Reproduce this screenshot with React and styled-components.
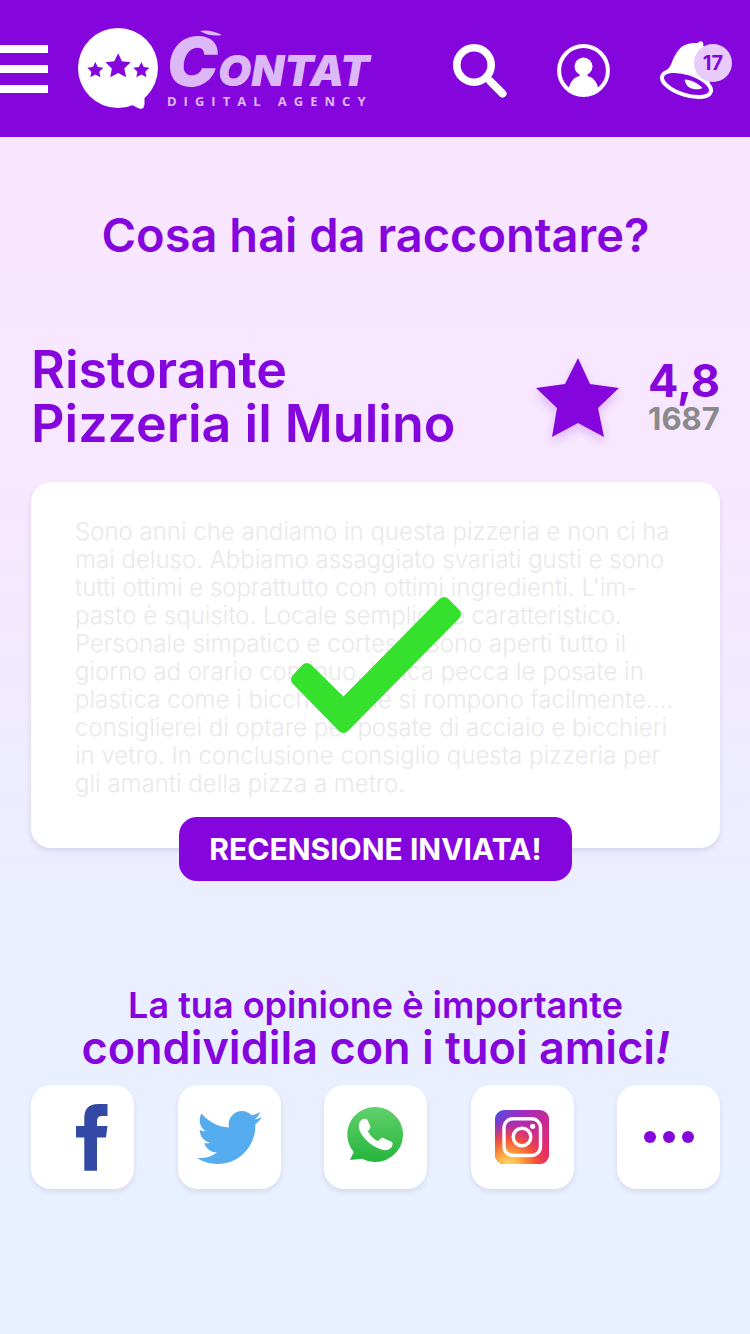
import React from "react"
import styled, { createGlobalStyle } from "styled-components"

// Icons
import { FaTwitter } from "react-icons/fa"

const purple = "#8506dc"

const GlobalStyle = createGlobalStyle`
    * {
        box-sizing: border-box;
    }

    body {
        margin: 0;
        min-height: 100vh;
        color: ${purple};
        font-family: Inter, "Liberation Sans", sans-serif;
        background: linear-gradient(#f9e6ff 0, #f7e7ff 36%, #ebeeff 66%, #e8f1ff 100%);
    }
`

const Header = styled.header`
    display: flex;
    align-items: center;
    height: 137px;
    padding-right: 18px;
    background: ${purple};
`

const IconButton = styled.button`
    display: flex;
    padding: 0;
    border: 0;
    color: white;
    background: none;
    font-family: inherit;
    cursor: pointer;
`

const MenuButton = styled(IconButton)`
    flex-direction: column;
    gap: 12px;
    width: 48px;
`

const MenuBar = styled.span`
    width: 100%;
    height: 8px;
    background: white;
`

const Brand = styled.a`
    display: flex;
    align-items: center;
    gap: 9px;
    margin-left: 30px;
    color: #dcb8f6;
    text-decoration: none;
`

const Wordmark = styled.span`
    position: relative;
    display: flex;
    flex-direction: column;
`

const BrandName = styled.span`
    display: block;
    height: 64px;
    font-size: 43px;
    font-style: italic;
    font-weight: 900;
    line-height: 64px;
    white-space: nowrap;

    &::first-letter {
        font-size: 68px;
    }
`

const BrandStroke = styled.svg`
    position: absolute;
    top: 1px;
    left: 33px;
`

const BrandTag = styled.span`
    font-family: "Open Sans", sans-serif;
    font-size: 13px;
    font-weight: 700;
    letter-spacing: 7px;
    line-height: 16px;
    white-space: nowrap;
`

const Actions = styled.nav`
    display: flex;
    align-items: center;
    gap: 50px;
    margin-left: auto;
    padding-top: 4px;
`

const BellButton = styled(IconButton)`
    position: relative;
    width: 72px;
`

const Badge = styled.span`
    position: absolute;
    top: 3px;
    right: 0;
    width: 38px;
    height: 38px;
    border-radius: 50%;
    color: ${purple};
    background: #e8cbfb;
    font-size: 20px;
    font-weight: 700;
    line-height: 38px;
    text-align: center;
`

const Main = styled.main`
    padding: 70px 30px 80px 31px;
`

const Title = styled.h1`
    margin: 0;
    font-size: 47px;
    font-weight: 600;
    line-height: 56px;
    text-align: center;
`

const Place = styled.section`
    display: flex;
    align-items: center;
    justify-content: space-between;
    margin-top: 80px;
`

const PlaceName = styled.h2`
    margin: 0;
    font-size: 52px;
    font-weight: 600;
    line-height: 54px;
`

const Rating = styled.div`
    display: flex;
    align-items: center;
    gap: 28px;
    padding-top: 2px;

    svg {
        filter: drop-shadow(0 5px 4px rgba(133, 6, 220, 0.2));
    }
`

const Score = styled.strong`
    display: block;
    font-size: 45px;
    font-weight: 700;
    line-height: 42px;
`

const Count = styled.span`
    display: block;
    color: #8a8a8a;
    font-size: 31px;
    font-weight: 700;
    line-height: 34px;
`

const Review = styled.section`
    position: relative;
    display: flex;
    flex-direction: column;
    align-items: center;
    margin-top: 31px;
    padding: 36px 44px 0;
    border-radius: 20px;
    background: white;
    box-shadow: 0 3px 5px rgba(60, 40, 110, 0.12);
`

const ReviewText = styled.p`
    align-self: stretch;
    margin: 0;
    color: #e9e9eb;
    font-size: 24px;
    font-weight: 300;
    line-height: 28px;
    white-space: pre;
`

const CheckMark = styled.svg`
    position: absolute;
    top: 115px;
    left: 50%;
    margin-left: -85px;
`

const SentButton = styled.button`
    height: 64px;
    margin: 19px 0 -33px;
    padding: 0 30px;
    border: 0;
    border-radius: 18px;
    color: white;
    background: ${purple};
    font: inherit;
    font-size: 30px;
    font-weight: 700;
    white-space: nowrap;
`

const Share = styled.section`
    margin-top: 137px;
    text-align: center;
`

const ShareLead = styled.p`
    margin: 0;
    font-size: 36px;
    font-weight: 600;
    line-height: 40px;
`

const ShareTitle = styled.h2`
    margin: 0;
    font-size: 45px;
    font-weight: 600;
    line-height: 46px;
`

const Tiles = styled.div`
    display: flex;
    justify-content: space-between;
    margin-top: 14px;
`

const Tile = styled.button`
    display: flex;
    align-items: center;
    justify-content: center;
    width: 103px;
    height: 104px;
    padding: 0;
    border: 0;
    border-radius: 20px;
    color: ${(props) => props.$color || purple};
    background: white;
    box-shadow: 0 3px 5px rgba(60, 40, 110, 0.1);
    cursor: pointer;
`

const STAR = "42,0 54,26 83,30 62,50 68,79 42,65 16,79 21,50 0,30 29,26"

const REVIEW = `Sono anni che andiamo in questa pizzeria e non ci ha
mai deluso. Abbiamo assaggiato svariati gusti e sono
tutti ottimi e soprattutto con ottimi ingredienti. L'im-
pasto è squisito. Locale semplice e caratteristico.
Personale simpatico e cortese. Sono aperti tutto il
giorno ad orario continuo. Unica pecca le posate in
plastica come i bicchieri che si rompono facilmente....
consiglierei di optare per posate di acciaio e bicchieri
in vetro. In conclusione consiglio questa pizzeria per
gli amanti della pizza a metro.`

const BubbleLogo = () => (
    <svg width="80" height="82" viewBox="0 0 80 82">
        <circle cx="40" cy="40" r="40" fill="white" />
        <path d="M76 55Q72 66 66.5 69.5V76Q66 81.5 62 80.8Q57 79 53 76Z" fill="white" />
        <g fill={purple}>
            <polygon points={STAR} transform="translate(27.4 25.2) scale(.305)" />
            <polygon points={STAR} transform="translate(9.3 34) scale(.193)" />
            <polygon points={STAR} transform="translate(55.3 34) scale(.193)" />
        </g>
    </svg>
)

const SearchIcon = () => (
    <svg width="54" height="54" viewBox="0 0 54 54" fill="none" stroke="currentColor">
        <circle cx="21" cy="21" r="17.2" strokeWidth="7.6" />
        <path d="M34 34L38 38" strokeWidth="5" />
        <path d="M37.5 37.5L49.5 49.5" strokeWidth="8" strokeLinecap="round" />
    </svg>
)

const UserIcon = () => (
    <svg width="53" height="53" viewBox="0 0 53 53" fill="currentColor">
        <circle cx="26.5" cy="26.5" r="24.4" fill="none" stroke="currentColor" strokeWidth="4" />
        <circle cx="26.5" cy="22.5" r="9" />
        <path d="M22.5 29H30.5V32C36 33.5 39.5 37 41 43.5C37 48.5 32 50.5 26.5 50.5S16 48.5 12 43.5C13.5 37 17 33.5 22.5 32Z" />
    </svg>
)

const BellIcon = () => (
    <svg width="60" height="59" viewBox="0 0 60 59" fill="currentColor">
        <path d="M2 33C7 29 10 27 12 21C15 13 19 7 24 4.5C29 2 33 2 38 2C38.5-.3 43-.8 43.3 2.5V5C49 8 52 12 52 18C51 27 46 33 50 42L44 48L10 36Z" />
        <ellipse cx="26.5" cy="43" rx="25.5" ry="11" transform="rotate(18 26.5 43)" fill={purple} stroke="currentColor" strokeWidth="4" />
        <path d="M24.7 38.5C31 39 38 42 42.5 47C38 49.5 26 49.5 24.7 38.5Z" />
    </svg>
)

const FacebookIcon = () => (
    <svg width="103" height="104" viewBox="0 0 103 104" fill="currentColor">
        <path d="M76.5 19V31H71Q66 31 66 36V41H76.5L75 52.5H66V85.7H53.3V52.5H45V41H53.3V33Q53.3 19 67 19Z" />
    </svg>
)

const WhatsappIcon = () => (
    <svg width="103" height="104" viewBox="0 0 103 104">
        <defs>
            <linearGradient id="wa" x1="0" y1="0" x2="0" y2="1">
                <stop offset="0" stopColor="#61d06b" />
                <stop offset="1" stopColor="#25b53d" />
            </linearGradient>
        </defs>
        <path
            d="M51.7 22A28 27.5 0 1 1 38 73.8L26 75L29.7 67A28 27.5 0 0 1 51.7 22Z"
            fill="url(#wa)"
        />
        <path
            d="M39.3 34C42 33.5 43.2 34 44 36L46.3 41.3C47 43 44.7 45.2 44 46.3C45.5 50 49.5 54.3 54 56C55.5 55 57 52.3 58.7 52.7L67.5 56.7C69.5 58 68.5 61.5 66.5 63.3C64 65.5 60.5 65.5 57.5 64.5C47 61.3 38.5 53 35.5 45C33.8 40 35.5 35 39.3 34Z"
            fill="white"
        />
    </svg>
)

const InstagramIcon = () => (
    <svg width="54" height="54" viewBox="0 0 54 54" fill="none">
        <defs>
            <linearGradient id="ig" x1="0" y1="0" x2="1" y2="1">
                <stop offset="0" stopColor="#4b4fe0" />
                <stop offset=".3" stopColor="#a52bbd" />
                <stop offset=".7" stopColor="#d92b82" />
                <stop offset="1" stopColor="#ee2a55" />
            </linearGradient>
            <radialGradient id="ig-glow" cx=".25" cy="1.05" r=".85">
                <stop offset="0" stopColor="#ffdf75" />
                <stop offset=".25" stopColor="#fdb43f" />
                <stop offset=".6" stopColor="#f9572d" stopOpacity=".9" />
                <stop offset="1" stopColor="#e0306c" stopOpacity="0" />
            </radialGradient>
        </defs>
        <rect width="54" height="54" rx="9" fill="url(#ig)" />
        <rect width="54" height="54" rx="9" fill="url(#ig-glow)" />
        <g stroke="white" strokeWidth="3.4">
            <rect x="9" y="8.7" width="36.5" height="36.8" rx="9" />
            <circle cx="27" cy="27" r="8.8" />
        </g>
        <circle cx="37.7" cy="16.3" r="2.6" fill="white" />
    </svg>
)

const MoreIcon = () => (
    <svg width="50" height="12" viewBox="0 0 50 12" fill="currentColor">
        <circle cx="6" cy="6" r="6" />
        <circle cx="25" cy="6" r="6" />
        <circle cx="44" cy="6" r="6" />
    </svg>
)

const NETWORKS = [
    { name: "Facebook", color: "#3349a5", icon: <FacebookIcon /> },
    { name: "Twitter", color: "#55acee", icon: <FaTwitter size={65} /> },
    { name: "WhatsApp", icon: <WhatsappIcon /> },
    { name: "Instagram", icon: <InstagramIcon /> },
    { name: "Altro", icon: <MoreIcon /> },
]

const App = () => {
    return (
        <>
            <GlobalStyle />
            <Header>
                <MenuButton aria-label="Menu">
                    <MenuBar />
                    <MenuBar />
                    <MenuBar />
                </MenuButton>

                <Brand href="/">
                    <BubbleLogo />
                    <Wordmark>
                        <BrandName>CONTAT</BrandName>
                        <BrandStroke width="22" height="6" viewBox="0 0 22 6" fill="currentColor">
                            <path d="M0 1Q10-1 22 5Q10 7 0 1Z" />
                        </BrandStroke>
                        <BrandTag>DIGITAL AGENCY</BrandTag>
                    </Wordmark>
                </Brand>

                <Actions>
                    <IconButton aria-label="Cerca">
                        <SearchIcon />
                    </IconButton>
                    <IconButton aria-label="Profilo">
                        <UserIcon />
                    </IconButton>
                    <BellButton aria-label="Notifiche">
                        <BellIcon />
                        <Badge>17</Badge>
                    </BellButton>
                </Actions>
            </Header>

            <Main>
                <Title>Cosa hai da raccontare?</Title>

                <Place>
                    <PlaceName>
                        Ristorante
                        <br />
                        Pizzeria il Mulino
                    </PlaceName>
                    <Rating>
                        <svg width="84" height="80" viewBox="0 0 84 80" fill="currentColor">
                            <polygon points={STAR} />
                        </svg>
                        <div>
                            <Score>4,8</Score>
                            <Count>1687</Count>
                        </div>
                    </Rating>
                </Place>

                <Review>
                    <ReviewText>{REVIEW}</ReviewText>
                    <CheckMark width="170" height="136" viewBox="0 0 170 136">
                        <path
                            d="M16 72L6 82.5L52.5 130L164 17L153 6L52.5 108Z"
                            fill="#35e12d"
                            stroke="#35e12d"
                            strokeWidth="12"
                            strokeLinejoin="round"
                        />
                    </CheckMark>
                    <SentButton>RECENSIONE INVIATA!</SentButton>
                </Review>

                <Share>
                    <ShareLead>La tua opinione è importante</ShareLead>
                    <ShareTitle>
                        condividila con i tuoi amici<em>!</em>
                    </ShareTitle>
                    <Tiles>
                        {NETWORKS.map(({ name, color, icon }) => (
                            <Tile key={name} $color={color} aria-label={name}>
                                {icon}
                            </Tile>
                        ))}
                    </Tiles>
                </Share>
            </Main>
        </>
    )
}

export default App
